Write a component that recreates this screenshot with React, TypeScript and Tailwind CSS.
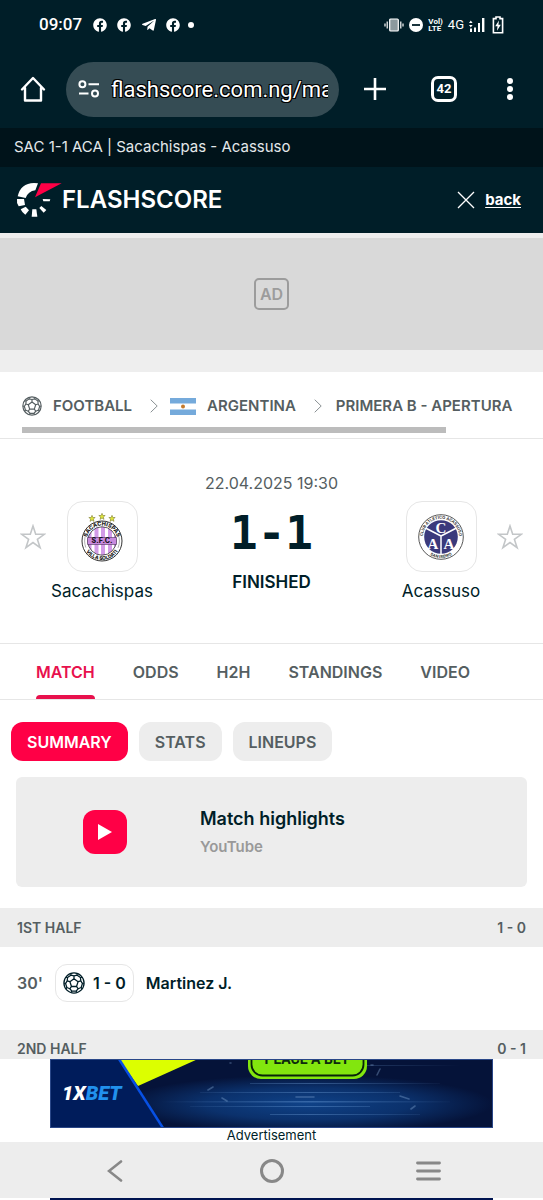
import React from "react";
import { FaFacebook, FaTelegramPlane } from "react-icons/fa";

const polar = (radius: number, angle: number) => {
  const a = (angle * Math.PI) / 180;
  return `${(12 + radius * Math.cos(a)).toFixed(2)} ${(12 + radius * Math.sin(a)).toFixed(2)}`;
};

const corners = [-90, -18, 54, 126, 198];

const ballPath =
  `M${corners.map((a) => polar(4.7, a)).join("L")}Z` +
  corners
    .map(
      (a) =>
        `M${polar(4.7, a)}L${polar(7.8, a)}` +
        `M${polar(10.8, a - 18)}L${polar(9.2, a - 22)}L${polar(7.8, a)}L${polar(9.2, a + 22)}L${polar(10.8, a + 18)}` +
        `M${polar(9.2, a + 22)}L${polar(9.2, a + 50)}`
    )
    .join("");

function Football({ className }: { className: string }) {
  return (
    <svg viewBox="0 0 24 24" fill="none" stroke="currentColor" strokeWidth="1.4" className={className}>
      <circle cx="12" cy="12" r="11" />
      <path d={ballPath} strokeLinejoin="round" />
    </svg>
  );
}

function StatusBar() {
  return (
    <div className="flex h-[50px] items-center justify-between px-[39px] font-[Roboto,sans-serif]">
      <div className="flex items-center">
        <span className="text-[17px] font-medium">09:07</span>
        <FaFacebook className="ml-[11px] size-[14px]" />
        <FaFacebook className="ml-[10px] size-[14px]" />
        <FaTelegramPlane className="ml-[10px] size-4" />
        <FaFacebook className="ml-[9px] size-[14px]" />
        <span className="ml-2 size-[6px] rounded-full bg-white" />
      </div>
      <div className="flex items-center gap-[5px]">
        <svg viewBox="0 0 20 14" className="h-[14px] w-5" stroke="currentColor" fill="none">
          <path d="M1 5.5v3M3.2 3.5v7M16.8 3.5v7M19 5.5v3" strokeWidth="1.2" />
          <rect x="5.7" y="1" width="8.6" height="12" rx="1" fill="#8b999e" strokeWidth="1.2" />
        </svg>
        <svg viewBox="0 0 14 14" className="size-[14px]">
          <circle cx="7" cy="7" r="7" fill="currentColor" />
          <path d="M3 7h8" stroke="#001e28" strokeWidth="1.8" />
        </svg>
        <span className="flex flex-col text-[8px] leading-[7px] font-bold">
          <span>Vol)</span>
          <span>LTE</span>
        </span>
        <span className="text-[13px]">4G</span>
        <svg viewBox="0 0 16 14" className="h-[14px] w-4" fill="currentColor">
          <path d="M0 5l1.8-2.6L3.6 5zM0 7h3.6L1.8 9.4zM1 10.5h2V14H1zM5 9.5h2V14H5zM9 5h2v9H9zM13 0h2.4v14H13z" />
        </svg>
        <svg viewBox="0 0 12 18" className="ml-[2px] h-[18px] w-3" fill="none">
          <path d="M4 1h4v1.6h2.6v14.2H1.4V2.6H4z" stroke="currentColor" strokeWidth="1.6" />
          <path d="M7 4.5L3.2 10.3h2.3L5 14.8l3.8-6H6.4z" fill="currentColor" />
        </svg>
      </div>
    </div>
  );
}

function AddressBar() {
  return (
    <div className="flex h-[78px] items-center pr-[30px] pl-5 font-[Roboto,sans-serif]">
      <button aria-label="Home">
        <svg viewBox="0 0 26 26" className="size-[26px]" fill="none" stroke="currentColor" strokeWidth="2.4" strokeLinejoin="round" strokeLinecap="round">
          <path d="M2 13.5L13 2l11 11.5M5 12v12.5h16V12" />
        </svg>
      </button>
      <div className="ml-5 flex h-[55px] min-w-0 flex-1 items-center rounded-full bg-[#354c54] pr-[11px] pl-3">
        <svg viewBox="0 0 22 18" className="h-[18px] w-[22px] shrink-0" fill="none" stroke="currentColor" strokeWidth="2">
          <circle cx="4.4" cy="4.2" r="3" />
          <path d="M10.5 4.2H21M1 13.4h9.5" />
          <circle cx="17" cy="13.4" r="3" />
        </svg>
        <input
          aria-label="Address"
          readOnly
          defaultValue="flashscore.com.ng/ma"
          className="ml-[11px] h-8 w-full min-w-0 bg-transparent text-[22px] outline-none [text-shadow:1px_1px_0_#000,-1px_-1px_0_#000,1px_-1px_0_#000,-1px_1px_0_#000]"
        />
      </div>
      <button aria-label="New tab" className="ml-6">
        <svg viewBox="0 0 24 24" className="size-6" stroke="currentColor" strokeWidth="2.6">
          <path d="M12 1v22M1 12h22" />
        </svg>
      </button>
      <button className="ml-11 flex size-[26px] items-center justify-center rounded-[7px] border-[3px] border-white text-[13px] font-bold">
        42
      </button>
      <button aria-label="More" className="ml-[50px] flex flex-col gap-[2px]">
        <span className="size-[6px] rounded-full bg-white" />
        <span className="size-[6px] rounded-full bg-white" />
        <span className="size-[6px] rounded-full bg-white" />
      </button>
    </div>
  );
}

function SiteHeader() {
  return (
    <header className="flex h-[66px] items-center justify-between pr-[22px] pl-4">
      <a href="#" className="flex items-center">
        <svg viewBox="48 156 138 108" className="h-9 w-[46px]" fill="#fff">
          <path d="M114 160L106 181Q84 184 77 204L53 199Q62 160 102 159Z" />
          <path d="M51 207H72L75 225L56 229Q49 219 51 207Z" />
          <path d="M62 238L77 230L87 241L76 254Q66 248 62 238Z" />
          <path d="M97 238H109L112 260H95Z" />
          <path d="M118 234L124 228L139 240L131 248Z" />
          <path d="M128 207L151 208L149 214H130Z" />
          <path d="M123 160H185L105 202Z" fill="#ff0046" />
        </svg>
        <span className="text-2xl leading-7 font-semibold">FLASHSCORE</span>
      </a>
      <a href="#" className="flex items-center gap-[10px]">
        <svg viewBox="0 0 18 18" className="size-[18px]" stroke="currentColor" strokeWidth="1.3">
          <path d="M1 1l16 16M17 1L1 17" />
        </svg>
        <span className="text-[15px] font-bold underline underline-offset-2">back</span>
      </a>
    </header>
  );
}

function Chevron() {
  return (
    <svg viewBox="0 0 8 14" className="h-[14px] w-2 shrink-0" fill="none" stroke="#8a9194" strokeWidth="1">
      <path d="M.7.7L7.2 7 .7 13.3" />
    </svg>
  );
}

function Breadcrumbs() {
  return (
    <nav className="border-b border-[#e6e6e6] px-[22px] pt-[23px] pb-[5px] text-[#555e61]">
      <div className="flex h-[22px] items-center text-[15px] font-semibold whitespace-nowrap">
        <Football className="mr-[11px] size-5 shrink-0" />
        <a href="#" className="mr-[18px]">FOOTBALL</a>
        <Chevron />
        <svg viewBox="0 0 26 17" className="mr-[11px] ml-3 h-[17px] w-[26px] shrink-0">
          <path fill="#fff" d="M0 0h26v17H0z" />
          <path fill="#75aadb" d="M0 0h26v5.5H0zM0 11.5h26V17H0z" />
          <circle cx="13" cy="8.5" r="2" fill="#c67a2b" />
        </svg>
        <a href="#" className="mr-[18px]">ARGENTINA</a>
        <Chevron />
        <a href="#" className="ml-[14px]">PRIMERA B - APERTURA</a>
      </div>
      <div className="mt-[10px] h-[6px] w-[85%] bg-[#bcbcbc]" />
    </nav>
  );
}

function Star() {
  return (
    <button aria-label="Add to favourites" className="mt-[49px] shrink-0">
      <svg viewBox="0 0 26 26" className="size-[26px]" fill="none" stroke="#c3c6c8" strokeWidth="1.6">
        <path d="M13 2l2.7 8.3h8.7l-7 5.1 2.7 8.3-7.1-5.1-7.1 5.1 2.7-8.3-7-5.1h8.7z" />
      </svg>
    </button>
  );
}

function SmallStar({ x, y }: { x: number; y: number }) {
  return (
    <path
      transform={`translate(${x} ${y})`}
      d="M0-3.2L.9-1H3.2L1.3.5 2 2.9 0 1.5-2 2.9-1.3.5-3.2-1H-.9z"
      fill="#dfe63a"
      stroke="#6c6b22"
      strokeWidth=".5"
    />
  );
}

function SacachispasCrest() {
  return (
    <svg viewBox="0 0 42 50" className="h-[50px] w-[42px] font-[Inter,sans-serif] font-extrabold">
      <defs>
        <clipPath id="sfc-core">
          <circle cx="21" cy="29" r="14.2" />
        </clipPath>
        <path id="sfc-top" d="M5.6 29a15.4 15.4 0 0 1 30.8 0" />
        <path id="sfc-bottom" d="M2 29a19 19 0 0 0 38 0" />
      </defs>
      <SmallStar x={11} y={6.5} />
      <SmallStar x={21} y={4.5} />
      <SmallStar x={31} y={6.5} />
      <circle cx="21" cy="29" r="20" fill="#fff" stroke="#333" strokeWidth="1" />
      <circle cx="21" cy="29" r="17.4" fill="none" stroke="#777" strokeWidth=".6" strokeDasharray="14 40.66" strokeDashoffset="7" />
      <g clipPath="url(#sfc-core)">
        <path fill="#fff" d="M6 14h30v30H6z" />
        <path fill="#d39be8" d="M6 14h4.5v30H6zM13.5 14h4v30h-4zM20 14h4v30h-4zM27 14h4v30h-4zM33 14h4v30h-4z" />
      </g>
      <circle cx="21" cy="29" r="14.2" fill="none" stroke="#333" strokeWidth=".8" />
      <path d="M6.5 25.5h29v7h-29z" fill="#c98ade" stroke="#4a3157" strokeWidth=".6" />
      <text x="21" y="31.4" fontSize="7" textAnchor="middle" fill="#1d1424">S.F.C.</text>
      <text fontSize="5.6" fill="#222">
        <textPath href="#sfc-top" startOffset="50%" textAnchor="middle">SACACHISPAS</textPath>
      </text>
      <text fontSize="5" fill="#222">
        <textPath href="#sfc-bottom" startOffset="50%" textAnchor="middle">VILLA SOLDATI</textPath>
      </text>
    </svg>
  );
}

function AcassusoCrest() {
  return (
    <svg viewBox="0 0 46 46" className="size-[46px] font-['Liberation_Serif',serif] font-bold">
      <defs>
        <path id="caa-top" d="M4.8 23a18.2 18.2 0 0 1 36.4 0" />
        <path id="caa-bottom" d="M2 23a21 21 0 0 0 42 0" />
      </defs>
      <circle cx="23" cy="23" r="22.3" fill="#fff" stroke="#444" strokeWidth=".9" />
      <circle cx="23" cy="23" r="16.8" fill="#3b3a7c" />
      <path d="M23 22L7.5 14M23 22L38.5 14M23 22V40" stroke="#fff" strokeWidth="1.5" />
      <g fill="#fff" textAnchor="middle" fontSize="15">
        <text x="23" y="19">C</text>
        <text x="15" y="35">A</text>
        <text x="31" y="35">A</text>
      </g>
      <g fill="#333" fontSize="4" className="font-[Inter,sans-serif]">
        <text>
          <textPath href="#caa-top" startOffset="50%" textAnchor="middle">CLUB ATLETICO ACASSUSO</textPath>
        </text>
        <text>
          <textPath href="#caa-bottom" startOffset="50%" textAnchor="middle">SAN ISIDRO</textPath>
        </text>
      </g>
    </svg>
  );
}

function Team({ name, children }: { name: string; children: React.ReactNode }) {
  return (
    <div className="mt-[26px] flex w-28 shrink-0 flex-col items-center">
      <div className="flex size-[71px] items-center justify-center rounded-2xl border border-[#e6e6e6]">
        {children}
      </div>
      <a href="#" className="mt-2 text-[17px] leading-[22px]">{name}</a>
    </div>
  );
}

function Scoreboard() {
  return (
    <section className="flex items-start border-b border-[#e6e6e6] px-5 pt-9 pb-[41px]">
      <Star />
      <Team name="Sacachispas">
        <SacachispasCrest />
      </Team>
      <div className="flex flex-1 flex-col items-center whitespace-nowrap">
        <div className="text-base leading-4 text-[#555e61]">22.04.2025 19:30</div>
        <div className="mt-5 font-['DejaVu_Sans_Mono',monospace] text-[46px] leading-[44px] font-bold">1-1</div>
        <div className="mt-[17px] text-[17px] leading-5 font-semibold">FINISHED</div>
      </div>
      <Team name="Acassuso">
        <AcassusoCrest />
      </Team>
      <Star />
    </section>
  );
}

function Tabs() {
  return (
    <nav className="flex h-14 gap-[38px] border-b border-[#e6e6e6] px-9 text-base font-semibold text-[#555e61]">
      <a href="#" className="relative flex items-center text-[#e8114d]">
        MATCH
        <span className="absolute inset-x-0 bottom-0 h-1 rounded-t bg-[#e8114d]" />
      </a>
      {["ODDS", "H2H", "STANDINGS", "VIDEO"].map((tab) => (
        <a key={tab} href="#" className="flex items-center">
          {tab}
        </a>
      ))}
    </nav>
  );
}

function SubTabs() {
  return (
    <div className="mt-[22px] flex gap-[11px] px-[11px] text-base font-semibold text-[#555e61]">
      <button className="h-[39px] rounded-xl bg-[#ff0046] px-4 text-white">SUMMARY</button>
      <button className="h-[39px] rounded-xl bg-[#ededed] px-4">STATS</button>
      <button className="h-[39px] rounded-xl bg-[#ededed] px-4">LINEUPS</button>
    </div>
  );
}

function Highlights() {
  return (
    <a href="#" className="mx-4 mt-4 flex h-[110px] items-center rounded-md bg-[#ededed]">
      <span className="ml-[67px] flex size-11 items-center justify-center rounded-xl bg-[#ff0046]">
        <svg viewBox="0 0 14 16" className="h-4 w-[14px]" fill="#fff">
          <path d="M0 0l14 8-14 8z" />
        </svg>
      </span>
      <span className="ml-[73px] flex flex-col gap-1 pt-[2px]">
        <span className="text-lg leading-6 font-semibold">Match highlights</span>
        <span className="text-[15px] leading-6 font-semibold text-[#999]">YouTube</span>
      </span>
    </a>
  );
}

function Incident() {
  return (
    <div className="flex h-[83px] items-start px-[17px] pt-[17px] text-base font-semibold">
      <div className="flex h-[38px] w-[38px] items-center text-[#555e61]">30'</div>
      <div className="flex h-[38px] items-center gap-2 rounded-xl border border-[#e6e6e6] px-[7px]">
        <Football className="size-[22px]" />
        1 - 0
      </div>
      <a href="#" className="ml-3 leading-[38px]">Martinez J.</a>
    </div>
  );
}

function Banner() {
  return (
    <aside className="px-[50px]">
      <a href="#" className="block">
        <svg viewBox="0 0 443 69" className="block w-full font-[Roboto,sans-serif]">
          <defs>
            <radialGradient id="glow" cx=".58" cy=".65" r=".42">
              <stop offset="0" stopColor="#0f4288" />
              <stop offset=".55" stopColor="#0b316c" />
              <stop offset="1" stopColor="#051339" />
            </radialGradient>
            <linearGradient id="streak">
              <stop offset="0" stopColor="#7fb0e8" stopOpacity="0" />
              <stop offset=".5" stopColor="#7fb0e8" stopOpacity=".35" />
              <stop offset="1" stopColor="#7fb0e8" stopOpacity="0" />
            </linearGradient>
          </defs>
          <path d="M0 0h443v69H0z" fill="url(#glow)" />
          <g fill="url(#streak)">
            <path d="M110 42h290v1.5H110zM150 33h200v1H150zM140 47h180v1H140zM200 24h190v1H200zM300 6h110v1H300zM220 55h150v1H220z" />
          </g>
          <g stroke="#8fb4de" strokeLinecap="round" opacity=".35">
            <path d="M158 31l5-3M172 39l5 3M180 4h1M327 16l3-6M350 37l9 3M361 50l4-3M321 6h2M246 38h18" strokeWidth="1.6" />
          </g>
          <path d="M69 0h79L88 27z" fill="#dcff00" />
          <path d="M0 0h69l44 69H0z" fill="#001c5b" />
          <path d="M69 0l44 69" stroke="#0750e4" strokeWidth="2.5" />
          <rect x="198" y="-30" width="119" height="50" rx="13" fill="#82e60e" />
          <rect x="201.5" y="-30" width="112" height="46.5" rx="11" fill="#82e60e" stroke="#082409" strokeWidth="1.8" />
          <text x="257" y="5" textAnchor="middle" fontSize="14" fontWeight="700" fill="#0d2b0d">PLACE A BET</text>
          <text x="12" y="41" fontSize="20" fontWeight="900" fontStyle="italic" fill="#fff">
            1X<tspan fill="#2191ed">BET</tspan>
          </text>
          <rect x=".5" y=".5" width="442" height="68" fill="none" stroke="#2a4788" />
        </svg>
      </a>
      <div className="text-center text-[13px] leading-[14px]">Advertisement</div>
    </aside>
  );
}

function SystemNav() {
  return (
    <nav className="grid h-14 grid-cols-3 items-center justify-items-center bg-[#ededed] px-9 pt-[2px] text-[#888]">
      <button aria-label="Back">
        <svg viewBox="0 0 16 22" className="h-[22px] w-4" fill="none" stroke="currentColor" strokeWidth="2.6" strokeLinecap="round">
          <path d="M14 1.5L2 11l12 9.5" />
        </svg>
      </button>
      <button aria-label="Home screen" className="size-6 rounded-full border-[3px] border-current" />
      <button aria-label="Recent apps">
        <svg viewBox="0 0 25 20" className="h-5 w-[25px]" stroke="currentColor" strokeWidth="2.8" strokeLinecap="round">
          <path d="M1.5 2h22M1.5 10h22M1.5 18h22" />
        </svg>
      </button>
    </nav>
  );
}

export default function App(): JSX.Element {
  return (
    <div className="bg-white font-[Inter,sans-serif] text-[#001e28]">
      <div className="bg-[#001e28] text-white">
        <StatusBar />
        <AddressBar />
        <h1 className="h-[39px] bg-[#00131a] px-[14px] text-[15px] leading-[37px] text-[#e3e8ea]">
          SAC 1-1 ACA | Sacachispas - Acassuso
        </h1>
        <SiteHeader />
      </div>
      <div className="bg-[#eee] pt-[5px] pb-[22px]">
        <div className="flex h-28 items-center justify-center bg-[#d9d9d9]">
          <span className="rounded-[5px] border-2 border-[#9c9c9c] px-1 text-base leading-7 font-semibold text-[#9c9c9c]">
            AD
          </span>
        </div>
      </div>
      <Breadcrumbs />
      <Scoreboard />
      <Tabs />
      <SubTabs />
      <Highlights />
      <h2 className="mt-[21px] flex h-[39px] items-center justify-between bg-[#ededed] px-[17px] text-sm font-semibold text-[#555e61]">
        <span>1ST HALF</span>
        <span>1 - 0</span>
      </h2>
      <Incident />
      <h2 className="flex h-[29px] items-end justify-between bg-[#ededed] px-[17px] text-sm font-semibold text-[#555e61]">
        <span>2ND HALF</span>
        <span>0 - 1</span>
      </h2>
      <Banner />
      <SystemNav />
      <div className="mx-[50px] h-[2px] bg-[#001450]" />
    </div>
  );
}
